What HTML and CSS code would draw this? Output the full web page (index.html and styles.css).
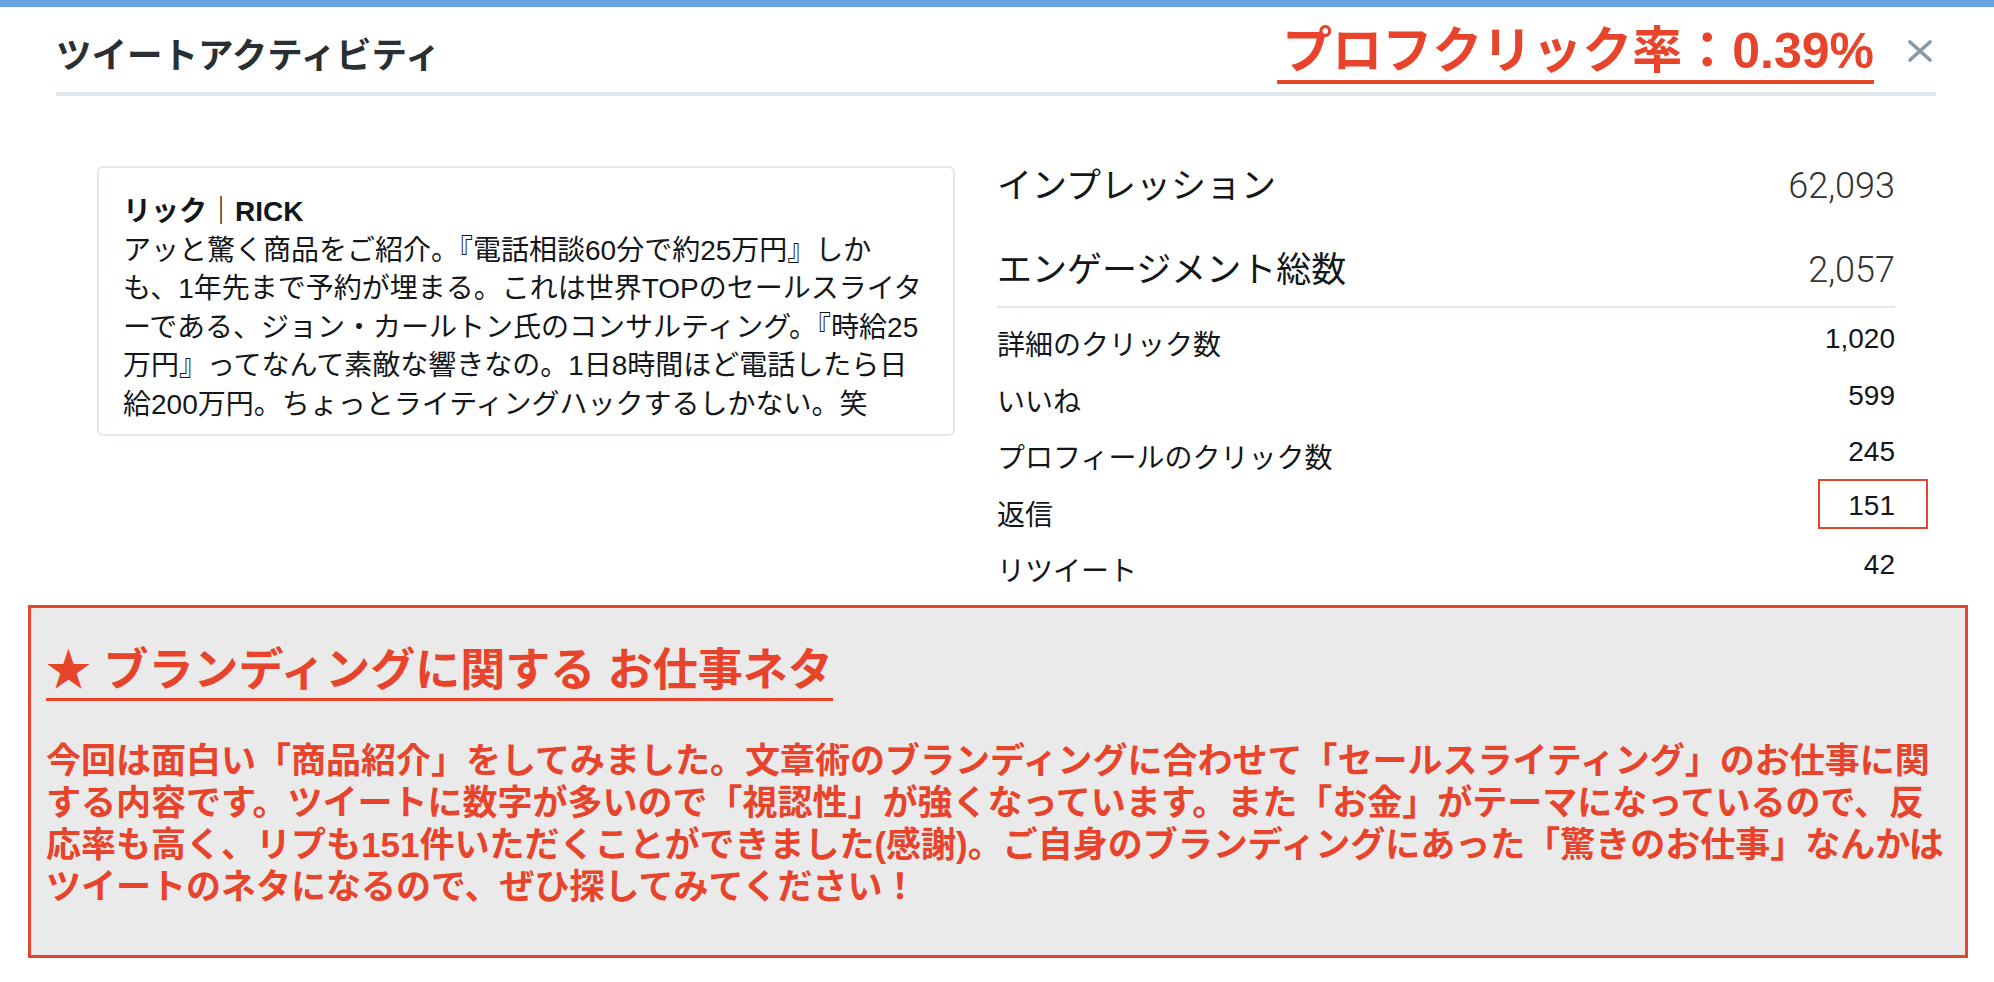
FILE: index.html
```html
<!DOCTYPE html>
<html lang="ja">
<head>
  <meta charset="UTF-8">
  <title>ツイートアクティビティ</title>
  <link rel="stylesheet" href="styles.css">
</head>
<body>

<div class="topbar"></div>

<header class="modal-header">
  <h2 class="title">ツイートアクティビティ</h2>
  <div class="header-right">
    <span class="rate">プロフクリック率：0.39%</span>
    <svg class="close" width="26" height="22" viewBox="0 0 26 22">
      <path d="M3 2 L23 20 M23 2 L3 20" stroke="#8899a6" stroke-width="3.6" stroke-linecap="round" fill="none"/>
    </svg>
  </div>
</header>

<section class="activity">
  <div class="tweet">
    <div class="tweet-name">リック｜RICK</div>
    <p class="tweet-text">アッと驚く商品をご紹介。『電話相談60分で約25万円』しか<br>も、1年先まで予約が埋まる。これは世界TOPのセールスライタ<br>ーである、ジョン・カールトン氏のコンサルティング。『時給25<br>万円』ってなんて素敵な響きなの。1日8時間ほど電話したら日<br>給200万円。ちょっとライティングハックするしかない。笑</p>
  </div>

  <div class="stats">
    <div class="stats-top">
      <div class="stat big"><span class="label">インプレッション</span><span class="num">62,093</span></div>
      <div class="stat big"><span class="label">エンゲージメント総数</span><span class="num">2,057</span></div>
    </div>
    <div class="stat"><span class="label">詳細のクリック数</span><span class="num">1,020</span></div>
    <div class="stat"><span class="label">いいね</span><span class="num">599</span></div>
    <div class="stat"><span class="label">プロフィールのクリック数</span><span class="num">245</span></div>
    <div class="stat"><span class="label">返信</span><span class="num marked">151</span></div>
    <div class="stat"><span class="label">リツイート</span><span class="num">42</span></div>
  </div>
</section>

<section class="note">
  <h3 class="note-title">★ ブランディングに関する お仕事ネタ</h3>
  <p class="note-text">今回は面白い「商品紹介」をしてみました。文章術のブランディングに合わせて「セールスライティング」のお仕事に関<br>する内容です。ツイートに数字が多いので「視認性」が強くなっています。また「お金」がテーマになっているので、反<br>応率も高く、リプも151件いただくことができました(感謝)。ご自身のブランディングにあった「驚きのお仕事」なんかは<br>ツイートのネタになるので、ぜひ探してみてください！</p>
</section>

</body>
</html>
```

FILE: styles.css
```css
* { box-sizing: border-box; }
body { margin: 0; background: #fff; color: #14171a; font-family: "Liberation Sans", "Noto Sans CJK JP", sans-serif; }

.topbar { height: 7px; background: #66a3e0; }

.modal-header {
  display: flex; justify-content: space-between; align-items: flex-start;
  height: 89px; margin: 0 58px 0 56px; border-bottom: 4px solid #e1e8ed;
}
.title { margin: 32px 0 0; font-size: 35.5px; line-height: 1; font-weight: bold; color: #292f33; }
.header-right { display: flex; align-items: flex-start; gap: 33px; margin-right: 3px; }
.rate {
  margin-top: 19px; padding: 0 0 4px 5px; font-size: 50px; line-height: 1; font-weight: bold;
  color: #e8432b; border-bottom: 4px solid #e8432b;
}
.close { margin-top: 33px; }

.activity { display: flex; align-items: flex-start; gap: 42px; padding: 69px 0 0 97px; }

.tweet {
  width: 858px; margin-top: 1px; padding: 25px 20px 10px 24px;
  border: 2px solid #e1e8ed; border-radius: 6px; font-size: 28px; line-height: 38.5px;
}
.tweet-name { font-weight: bold; }
.tweet-text { margin: 0; white-space: nowrap; }

.stats { width: 898px; }
.stats-top { border-bottom: 2px solid #e1e8ed; padding-bottom: 15px; margin-bottom: 10px; }
.stat { display: flex; justify-content: space-between; align-items: flex-start; font-size: 28px; }
.stat .label { line-height: 56.5px; }
.stat .num { line-height: 42px; }
.stat.big { font-size: 35px; }
.stat.big + .stat.big { margin-top: 42px; }
.stat.big .label { line-height: 42px; }
.stat.big .num { font-family: Roboto, "Liberation Sans", sans-serif; font-weight: 300; font-size: 36px; color: #333; }
.num.marked { border: 2px solid #e8432b; padding: 4px 31px 0 28px; margin: -9px -33px 0 0; }

.note {
  margin: 4px 26px 0 28px; padding: 36px 15px 46px; background: #eaeaea;
  border: 3px solid #e8432b; color: #e8432b; font-weight: bold;
}
.note-title {
  display: inline-block; margin: 0; font-size: 45px; line-height: 1.2; border-bottom: 3px solid #e8432b;
}
.note-text { margin: 39px 0 0; font-size: 35px; line-height: 42.3px; white-space: nowrap; }
```
